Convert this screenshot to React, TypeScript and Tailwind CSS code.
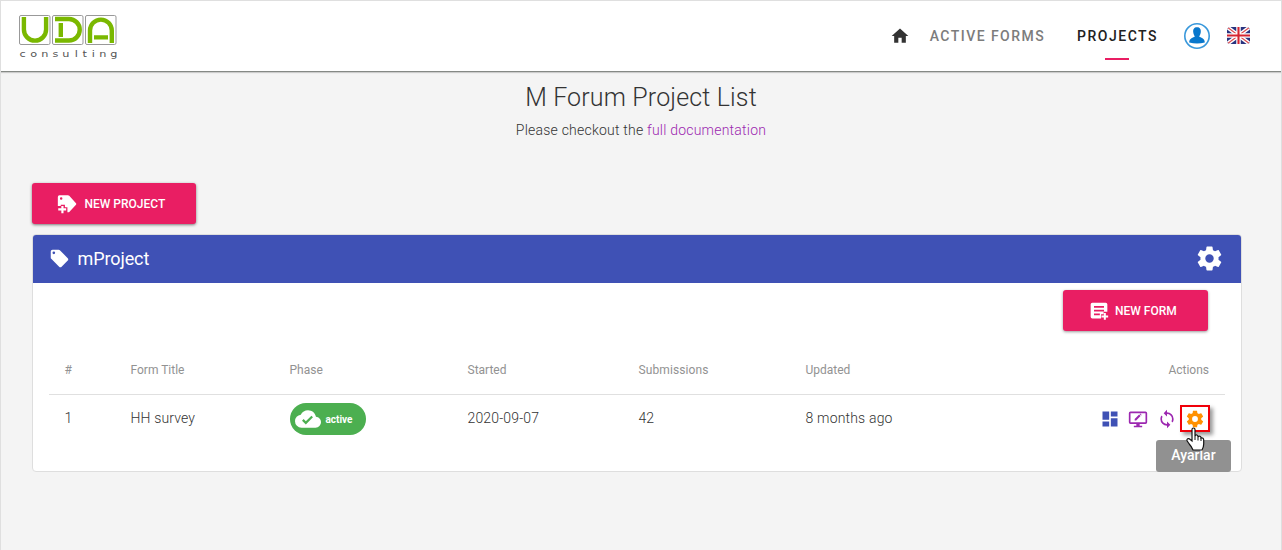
import React from "react";

const paths = {
  home: "M10,20V14H14V20H19V12H22L12,3L2,12H5V20H10Z",
  tag: "M5.5,7A1.5,1.5 0 0,1 4,5.5A1.5,1.5 0 0,1 5.5,4A1.5,1.5 0 0,1 7,5.5A1.5,1.5 0 0,1 5.5,7M21.41,11.58L12.41,2.58C12.05,2.22 11.55,2 11,2H4C2.89,2 2,2.89 2,4V11C2,11.55 2.22,12.05 2.59,12.41L11.58,21.41C11.95,21.77 12.45,22 13,22C13.55,22 14.05,21.77 14.41,21.41L21.41,14.41C21.78,14.05 22,13.55 22,13C22,12.44 21.77,11.94 21.41,11.58Z",
  tagPlus:
    "M3 1.5H13Q14 1.5 14.7 2.2L22.8 11Q23.6 12 22.8 13L14.7 21.5Q14 22 13 22H12.5V16H9.5V13H4.5V14.5H1V3.5Q1 1.5 3 1.5ZM5 4A1.5 1.5 0 1 0 5 7A1.5 1.5 0 1 0 5 4ZM5.2 14.5H7.8V17.2H11V19.8H7.8V23H5.2V19.8H1.5V17.2H5.2Z",
  formPlus:
    "M4 2H20Q22 2 22 4V13H17.5V16H14.5V21H4Q2 21 2 19V4Q2 2 4 2ZM6 6V8H18V6ZM6 10.5V12.5H18V10.5ZM6 15V17H13V15ZM17.8 14.5H20.2V17.3H23V19.7H20.2V22.5H17.8V19.7H15V17.3H17.8Z",
  cog: "M12,15.5A3.5,3.5 0 0,1 8.5,12A3.5,3.5 0 0,1 12,8.5A3.5,3.5 0 0,1 15.5,12A3.5,3.5 0 0,1 12,15.5M19.43,12.97C19.47,12.65 19.5,12.33 19.5,12C19.5,11.67 19.47,11.34 19.43,11L21.54,9.37C21.73,9.22 21.78,8.95 21.66,8.73L19.66,5.27C19.54,5.05 19.27,4.96 19.05,5.05L16.56,6.05C16.04,5.66 15.5,5.32 14.87,5.07L14.5,2.42C14.46,2.18 14.25,2 14,2H10C9.75,2 9.54,2.18 9.5,2.42L9.13,5.07C8.5,5.32 7.96,5.66 7.44,6.05L4.95,5.05C4.73,4.96 4.46,5.05 4.34,5.27L2.34,8.73C2.21,8.95 2.27,9.22 2.46,9.37L4.57,11C4.53,11.34 4.5,11.67 4.5,12C4.5,12.33 4.53,12.65 4.57,12.97L2.46,14.63C2.27,14.78 2.21,15.05 2.34,15.27L4.34,18.73C4.46,18.95 4.73,19.03 4.95,18.95L7.44,17.94C7.96,18.34 8.5,18.68 9.13,18.93L9.5,21.58C9.54,21.82 9.75,22 10,22H14C14.25,22 14.46,21.82 14.5,21.58L14.87,18.93C15.5,18.67 16.04,18.34 16.56,17.94L19.05,18.95C19.27,19.03 19.54,18.95 19.66,18.73L21.66,15.27C21.78,15.05 21.73,14.78 21.54,14.63L19.43,12.97Z",
  dashboard: "M13,3V9H21V3M13,21H21V11H13M3,21H11V15H3M3,13H11V3H3V13Z",
  monitorEdit:
    "M3 3H21Q23 3 23 5V16Q23 18 21 18H14V20H17V22H7V20H10V18H3Q1 18 1 16V5Q1 3 3 3ZM3 5V16H21V5ZM8 13.8V12L13.3 6.7L15.1 8.5L9.8 13.8ZM13.9 6.1L14.7 5.4L16.4 7.1L15.7 7.9Z",
  sync: "M12,18A6,6 0 0,1 6,12C6,11 6.25,10.03 6.7,9.2L5.24,7.74C4.46,8.97 4,10.43 4,12A8,8 0 0,0 12,20V23L16,19L12,15M12,4V1L8,5L12,9V6A6,6 0 0,1 18,12C18,13 17.75,13.97 17.3,14.8L18.76,16.26C19.54,15.03 20,13.57 20,12A8,8 0 0,0 12,4Z",
  cloud:
    "M10 17L6.5 13.5L7.91 12.08L10 14.17L15.18 9L16.59 10.41M19.35 10.03C18.67 6.59 15.64 4 12 4C9.11 4 6.6 5.64 5.35 8.03A6 6 0 0 0 0 14A6 6 0 0 0 6 20H19A5 5 0 0 0 24 15C24 12.36 21.95 10.22 19.35 10.03Z",
};

function Icon({ name, className }: { name: keyof typeof paths; className: string }) {
  return (
    <svg viewBox="0 0 24 24" fill="currentColor" fillRule="evenodd" className={`shrink-0 ${className}`}>
      <path d={paths[name]} />
    </svg>
  );
}

function Logo() {
  return (
    <div className="w-[99px]">
      <svg width="99" height="31" viewBox="0 0 99 31" fill="none" className="block">
        <g fill="white" stroke="#999">
          <rect x="1.5" y="1.5" width="30.5" height="29" rx="1.5" />
          <rect x="34.5" y="1.5" width="30.5" height="29" rx="1.5" />
          <rect x="67.5" y="1.5" width="30.5" height="29" rx="1.5" />
        </g>
        <g stroke="#7ab800" strokeWidth="4.4">
          <path d="M5.9 3V15.5A11.1 11.1 0 0 0 28.1 15.5V3" />
          <path d="M37 5H51A10.5 10.5 0 0 1 51 26.5H37M42.8 9V23" />
          <path d="M72 29V16.5A10.9 10.9 0 0 1 93.8 16.5V29M76 23.4H90" />
        </g>
      </svg>
      <div className="flex h-[14px] items-center justify-between pt-[3px] pl-[2px] font-['DejaVu_Sans',sans-serif] text-[9px] leading-[12px] text-[#555]">
        {"consulting".split("").map((letter, i) => (
          <span key={i} className="inline-block scale-x-125">{letter}</span>
        ))}
      </div>
    </div>
  );
}

function Flag() {
  return (
    <svg width="24" height="18" viewBox="0 0 24 18" className="block">
      <defs>
        <clipPath id="flag"><rect width="23" height="17" rx="3.5" /></clipPath>
      </defs>
      <g clipPath="url(#flag)">
        <rect width="24" height="18" fill="#29337f" />
        <path d="M0 0L23 17M23 0L0 17" stroke="#fff" strokeWidth="4" />
        <path d="M0 0L23 17M23 0L0 17" stroke="#dd4b4f" strokeWidth="1.2" />
        <path d="M11.5 0V17M0 8.5H23" stroke="#fff" strokeWidth="4.5" />
        <path d="M11.5 0V17M0 8.5H23" stroke="#d62530" strokeWidth="2.1" />
      </g>
    </svg>
  );
}

const columns = "grid grid-cols-[66px_159px_178px_171px_167px_1fr] items-center px-4";

export default function App() {
  return (
    <div className="h-[550px] overflow-hidden border-x border-t border-[#dfdfdf] bg-[#f4f4f4] font-['Roboto',sans-serif] text-[#212121]">
      <header className="flex h-[71px] justify-between border-b border-[#858985] bg-white shadow-[0_1px_1px_#ccc]">
        <div className="pt-[13px] pl-[17px]"><Logo /></div>
        <nav className="flex items-center pr-[30px] text-[14px] font-medium tracking-[1.5px]">
          <Icon name="home" className="mr-[20px] size-5 text-[#333]" />
          <span className="mr-[32px] tracking-[1.45px] text-[#7c7c7c]">ACTIVE FORMS</span>
          <span className="flex h-full flex-col items-center pt-[25px]">
            <span className="h-[32px] leading-5">PROJECTS</span>
            <span className="mr-[2px] h-[2px] w-6 bg-[#e91e63]" />
          </span>
          <svg width="26" height="26" viewBox="0 0 26 26" className="ml-[26px]">
            <circle cx="13" cy="13" r="12.2" fill="white" stroke="#3998db" strokeWidth="1.6" />
            <path d="M13 4.3C16 4.3 17 6.4 16.8 9C16.6 11.5 15.6 12.5 15.2 13.4C16.5 14.7 20.8 14.7 20.8 19.6Q13 21.5 5.2 19.6C5.2 14.7 9.5 14.7 10.8 13.4C10.4 12.5 9.4 11.5 9.2 9C9 6.4 10 4.3 13 4.3Z" fill="#0877cc" />
          </svg>
          <span className="ml-[17px]"><Flag /></span>
        </nav>
      </header>

      <main className="pr-[39px] pl-[31px]">
        <div className="flex flex-col items-center pl-[8px]">
          <h1 className="mt-[8px] text-[25px] leading-9 font-light tracking-[0.15px] text-[#333]">M Forum Project List</h1>
          <p className="mt-[4px] text-[14px] leading-5 font-light tracking-[0.22px] text-[#333]">
            Please checkout the <a className="text-[#9c27b0]">full documentation</a>
          </p>
        </div>
        <button className="-ml-[0.5px] mt-[43px] flex h-[41px] w-[164px] items-center rounded-[3px] bg-[#e91e63] pl-[25px] text-[12px] font-medium text-white shadow-[0_1px_3px_rgba(0,0,0,0.5)]">
          <Icon name="tagPlus" className="mr-[8px] size-5" />
          NEW PROJECT
        </button>

        <section className="-ml-[0.5px] mt-[10px] h-[238px] rounded-[4px] border border-[#dedede] bg-white">
          <div className="flex h-[48px] items-center justify-between rounded-t-[3px] bg-[#3f51b5] pr-[17px] pb-[2px] pl-[16px] text-white">
            <h2 className="flex items-center gap-[8px] text-[18px] tracking-[-0.1px]">
              <Icon name="tag" className="size-[21px]" />
              mProject
            </h2>
            <Icon name="cog" className="size-[29px]" />
          </div>
          <div className="flex justify-end pt-[7px] pr-[33px]">
            <button className="flex h-[41px] w-[145px] items-center rounded-[3px] bg-[#e91e63] pl-[26px] text-[12px] font-medium text-white shadow-[0_1px_3px_rgba(0,0,0,0.4)]">
              <Icon name="formPlus" className="mr-[6px] size-5" />
              NEW FORM
            </button>
          </div>
          <div className="mx-4 mt-[15px]">
            <div className={`${columns} h-[49px] border-b border-[#e0e0e0] text-[12px] text-[#929292]`}>
              <span>#</span><span>Form Title</span><span>Phase</span><span>Started</span><span className="tracking-[0.1px]">Submissions</span>
              <span className="col-start-6 row-start-1">Updated</span>
              <span className="col-start-6 row-start-1 justify-self-end">Actions</span>
            </div>
            <div className={`${columns} h-[48px] text-[14px] font-light text-[#333]`}>
              <span className="-mt-[2px]">1</span>
              <span className="-mt-[2px] tracking-[0.15px]">HH survey</span>
              <span className="flex h-8 w-[76px] items-center rounded-full bg-[#4caf50] pl-[5px] text-[10px] font-bold text-white">
                <Icon name="cloud" className="mr-[5px] size-[26px]" />active
              </span>
              <span className="-mt-[2px] tracking-[0.15px]">2020-09-07</span>
              <span className="-mt-[2px]">42</span>
              <span className="col-start-6 row-start-1 -mt-[2px] tracking-[0.18px]">8 months ago</span>
              <div className="relative col-start-6 row-start-1 -mt-px flex items-center justify-self-end text-[#9c27b0]">
                <Icon name="dashboard" className="mr-[8px] size-5 text-[#3f51b5]" />
                <Icon name="monitorEdit" className="mr-[9px] size-5" />
                <Icon name="sync" className="mr-[3px] size-5" />
                <span className="-mr-[1px] flex h-[27px] w-[30px] items-center justify-center border-2 border-[#f00009] shadow-[3px_3px_4px_rgba(0,0,0,0.4)]">
                  <Icon name="cog" className="size-5 text-[#ff9100]" />
                </span>
                <span className="absolute top-[35px] -right-[22px] flex h-8 w-[75px] items-center justify-center rounded-[3px] bg-[#919191] pb-[2px] text-[14px] font-medium text-white">Ayarlar</span>
                <svg width="20" height="26" viewBox="0 0 20 26" className="absolute top-[22px] right-[3px]">
                  <path d="M6 14V2.5Q6 1 7.5 1Q9 1 9 2.5V9Q9.5 7.5 11 8Q12 8.4 12 10Q12.5 8.8 14 9.3Q15 9.7 15 11Q17.7 10.5 17.7 13V17Q17.7 20 16 23H7Q5.8 19.8 3.2 17L1.2 14Q.5 12.5 1.7 11.8Q3 11.2 4.3 12.5Z" fill="white" stroke="#111" strokeWidth="1.2" />
                  <path d="M9 9V13M12 10V13.5M15 11V14" stroke="#111" strokeWidth="1" />
                </svg>
              </div>
            </div>
          </div>
        </section>
      </main>
    </div>
  );
}
